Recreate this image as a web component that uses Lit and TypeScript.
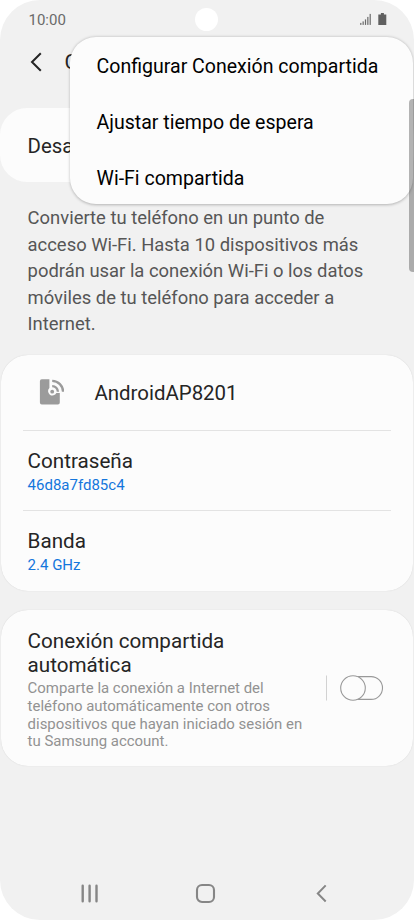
import { LitElement, html, css, svg } from "lit";
import { customElement } from "lit/decorators.js";

const MENU = ["Configurar Conexión compartida", "Ajustar tiempo de espera", "Wi-Fi compartida"];
const INTRO = [
  "Convierte tu teléfono en un punto de",
  "acceso Wi-Fi. Hasta 10 dispositivos más",
  "podrán usar la conexión Wi-Fi o los datos",
  "móviles de tu teléfono para acceder a",
  "Internet.",
];
const AUTO = [
  "Comparte la conexión a Internet del",
  "teléfono automáticamente con otros",
  "dispositivos que hayan iniciado sesión en",
  "tu Samsung account.",
];

@customElement("app-root")
export class AppRoot extends LitElement {
  static styles = css`
    :host { display: block; width: 414px; height: 920px; background: #fff; }
    * { box-sizing: border-box; }
    svg { display: block; }
    .phone {
      position: relative; width: 414px; height: 920px; overflow: hidden;
      display: flex; flex-direction: column;
      background: #f1f1f1; border-radius: 40px;
      font-family: Roboto, sans-serif; color: #252525; white-space: nowrap;
    }
    .status {
      height: 38px; flex: none; display: grid; grid-template-columns: 1fr 24px 1fr;
      align-items: center; padding: 0 26.5px 0 28.5px; color: #6a6a6a; font-size: 15px;
    }
    .clock { padding-top: 2px; }
    .camera { width: 23px; height: 23px; margin-left: -1px; border-radius: 50%; background: #fff; }
    .signals { display: flex; justify-content: flex-end; }
    .appbar { height: 70px; flex: none; display: flex; align-items: center; padding: 0 0 22px 28px; }
    .title { font-size: 21px; margin-left: 18.5px; }
    .card { background: #fcfcfc; border-radius: 27px; box-shadow: 0 0 1px #c8c8c8; flex: none; margin: 0 1px; }
    .state { height: 74px; display: flex; align-items: center; padding: 2px 27.6px 0; font-size: 20.4px; margin: 0; box-shadow: none; }
    .intro { height: 172px; flex: none; padding: 23px 27.6px 0; font-size: 18.42px; line-height: 26.5px; color: #565656; }
    .network { height: 236px; padding: 0 22px; display: flex; flex-direction: column; margin-top: 0.5px; }
    .row { padding: 2px 4.6px 0; display: flex; flex-direction: column; justify-content: center; }
    .row + .row { border-top: 1px solid #e3e3e3; }
    .ap { height: 76px; flex-direction: row; align-items: center; justify-content: flex-start; font-size: 20.45px; padding-left: 10.8px; }
    .ap svg { margin: -2px 30.6px 0 0; }
    .entry { height: 80.5px; }
    .label { font-size: 20.65px; line-height: 24px; }
    .value { font-size: 15px; line-height: 18px; margin-top: 3px; color: #1476dc; }
    .auto { height: 156px; margin-top: 19.5px; padding: 0 28px 0 26.6px; display: flex; align-items: center; justify-content: space-between; }
    .copy { padding-top: 4px; }
    .note { font-size: 14.95px; line-height: 17.7px; color: #929292; margin-top: 3.5px; }
    .toggle { flex: none; }
    .fill { flex: 1; }
    .nav { height: 54px; flex: none; display: flex; padding: 16px 0 0 80px; }
    .nav .home { margin-left: 95px; }
    .nav .back { margin-left: 97px; }
    .scroll { position: absolute; right: 0; top: 99px; width: 5px; height: 173px; border-radius: 4px 0 0 4px; background: rgba(0, 0, 0, 0.29); }
    .menu {
      position: absolute; left: 69.6px; top: 37px; width: 343.4px; height: 167px; border-radius: 26px;
      background: #fcfcfc; box-shadow: 0 0.5px 3px rgba(0, 0, 0, 0.26);
      display: flex; flex-direction: column; color: #000; padding-top: 1px;
    }
    .item { height: 56px; flex: none; display: flex; align-items: center; padding-left: 27px; font-size: 19.55px; }
  `;

  render() {
    return html`
      <div class="phone">
        <div class="status">
          <span class="clock">10:00</span>
          <span class="camera"></span>
          <span class="signals">
            <svg width="28" height="14" viewBox="0 0 28 14" fill="#6a6a6a">
              ${[2, 3.5, 5.5, 8, 11].map((h, i) => svg`<rect x=${0.2 + i * 2.35} y=${12.9 - h} width="1.2" height=${h} />`)}
              <path d="M20.9 1h3v1.4h2.4v10.6h-8V2.4h2.6z" fill="#606060" />
            </svg>
          </span>
        </div>
        <div class="appbar">
          <svg width="18" height="20" viewBox="0 0 18 20" fill="none" stroke="#252525" stroke-width="2">
            <path d="M12.8 1.2 4 10l8.8 8.8" />
          </svg>
          <span class="title">C</span>
        </div>
        <div class="card state">Desa</div>
        <div class="intro">${INTRO.map((t) => html`<div>${t}</div>`)}</div>
        <div class="card network">
          <div class="row ap">
            <svg width="30" height="30" viewBox="0 0 30 30">
              <path d="M7.8 2.3h7.6v8.6a4.4 4.4 0 1 0 7 5.1h3.4v9.5q0 1.9-1.9 1.9H7.8q-1.9 0-1.9-1.9V4.2q0-1.9 1.9-1.9z" fill="#9b9b9b" />
              <circle cx="18.2" cy="14.7" r="1.9" fill="#9b9b9b" />
              <path d="M18.2 9.1a5.7 5.7 0 0 1 5.7 5.7M18.2 3.9a10.9 10.9 0 0 1 10.9 10.9" fill="none" stroke="#9b9b9b" stroke-width="2.4" />
            </svg>
            <span>AndroidAP8201</span>
          </div>
          <div class="row entry"><span class="label">Contraseña</span><span class="value">46d8a7fd85c4</span></div>
          <div class="row entry"><span class="label">Banda</span><span class="value">2.4 GHz</span></div>
        </div>
        <div class="card auto">
          <div class="copy">
            <div class="label">Conexión compartida</div>
            <div class="label">automática</div>
            <div class="note">${AUTO.map((t) => html`<div>${t}</div>`)}</div>
          </div>
          <svg class="toggle" width="60" height="28" viewBox="0 0 60 28" fill="none">
            <path d="M1.5 1.5v25" stroke="#d2d2d2" />
            <rect x="16.5" y="2.6" width="41" height="22.8" rx="11.4" stroke="#999" stroke-width="1.1" />
            <circle cx="28" cy="14" r="12.3" fill="#fcfcfc" stroke="#999" stroke-width="1.1" />
          </svg>
        </div>
        <div class="fill"></div>
        <div class="nav">
          <svg width="20" height="22" viewBox="0 0 20 22" stroke="#868686" stroke-width="2.4" stroke-linecap="round">
            <path d="M2.7 3.8v15.4M9.6 3.8v15.4M16.5 3.8v15.4" />
          </svg>
          <svg class="home" width="22" height="22" viewBox="0 0 22 22" fill="none" stroke="#868686" stroke-width="2.1">
            <rect x="2" y="3" width="17" height="17" rx="5" />
          </svg>
          <svg class="back" width="14" height="22" viewBox="0 0 14 22" fill="none" stroke="#868686" stroke-width="2">
            <path d="M11.7 3.4 3.8 11.5l7.9 8" />
          </svg>
        </div>
        <div class="menu">${MENU.map((t) => html`<div class="item">${t}</div>`)}</div>
        <div class="scroll"></div>
      </div>
    `;
  }
}
